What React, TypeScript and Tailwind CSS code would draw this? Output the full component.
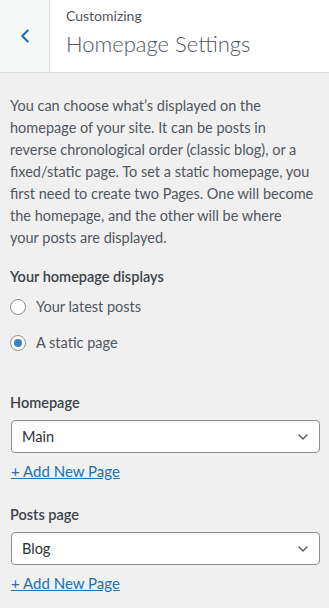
import { ChevronLeft, ChevronDown } from 'lucide-react';

const font = { fontFamily: 'Lato, "Liberation Sans", sans-serif' };

function Radio({ label, checked }: { label: string; checked?: boolean }) {
    return (
        <label className="flex items-center h-[36px] gap-[10px]">
            <span className="w-4 h-4 rounded-full border border-[#8c8f94] bg-white flex items-center justify-center">
                {checked && <span className="w-2 h-2 rounded-full bg-[#3582c4]"></span>}
            </span>
            <span className="text-[14.5px] text-[#50575e]">{label}</span>
        </label>
    );
}

function PageSelect({ title, value }: { title: string; value: string }) {
    return (
        <div>
            <div className="text-[14.5px] font-semibold text-[#3c434a] leading-[24px]">{title}</div>
            <div className="mt-[5px] ml-px h-[33px] w-[309px] bg-white border border-[#8c8f94] rounded-[4px] flex items-center justify-between pl-[10px] pr-[8px]">
                <span className="text-[14.5px] text-[#2c3338]">{value}</span>
                <ChevronDown className="w-[16px] h-[16px] text-[#50575e]" strokeWidth={2} />
            </div>
            <a className="inline-block mt-[6px] ml-px text-[15px] text-[#2271b1] underline leading-[24px]">+ Add New Page</a>
        </div>
    );
}

export default function App() {
    return (
        <div className="w-[329px] h-[608px] bg-[#f0f0f1] overflow-hidden" style={font}>
            {/* Header */}
            <div className="flex h-[73px] bg-white border-b border-[#dcdcde]">
                <div className="w-[50px] bg-[#f6f7f7] border-r border-[#dcdcde] flex items-center justify-center">
                    <ChevronLeft className="w-[22px] h-[22px] text-[#2271b1]" strokeWidth={2.4} />
                </div>
                <div className="pl-[16px] pt-[6px]">
                    <div className="text-[14px] text-[#50575e] leading-[20px]">Customizing</div>
                    <div className="text-[22px] font-light text-[#50575e] leading-[28px] mt-[4px]">Homepage Settings</div>
                </div>
            </div>

            <div className="px-[10px] pt-[22px]">
                <p className="text-[14.5px] leading-[22px] text-[#50575e] whitespace-nowrap">
                    You can choose what’s displayed on the<br />
                    homepage of your site. It can be posts in<br />
                    reverse chronological order (classic blog), or a<br />
                    fixed/static page. To set a static homepage, you<br />
                    first need to create two Pages. One will become<br />
                    the homepage, and the other will be where<br />
                    your posts are displayed.
                </p>

                <div className="mt-[16px] text-[14.5px] font-semibold text-[#3c434a] leading-[24px]">Your homepage displays</div>
                <div>
                    <Radio label="Your latest posts" />
                    <Radio label="A static page" checked />
                </div>

                <div className="mt-[30px]">
                    <PageSelect title="Homepage" value="Main" />
                </div>
                <div className="mt-[20px]">
                    <PageSelect title="Posts page" value="Blog" />
                </div>
            </div>
        </div>
    );
}
